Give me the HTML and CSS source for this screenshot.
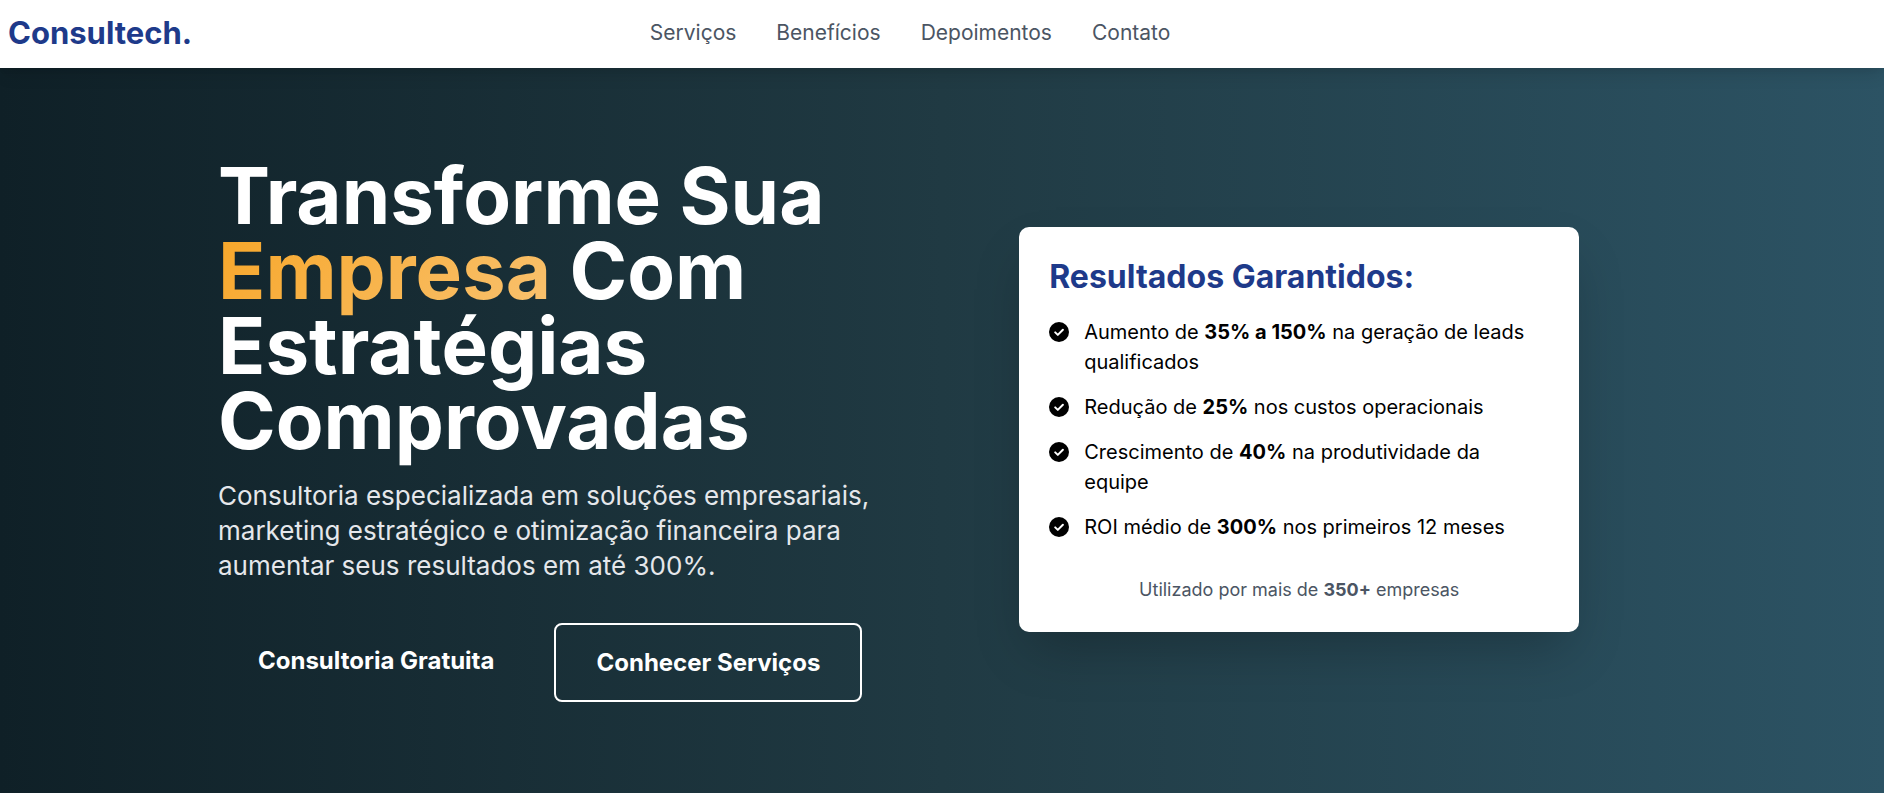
FILE: index.html
```html
<!DOCTYPE html>
<html lang="pt-BR">
<head>
    <meta charset="UTF-8">
    <meta name="viewport" content="width=device-width, initial-scale=1.0">
    <title>Consultech - Consultoria Empresarial</title>
    <link rel="stylesheet" href="styles.css">
</head>
<body>
    <!-- Icon used in the results list -->
    <svg class="sprite" aria-hidden="true">
        <symbol id="check" viewBox="0 0 20 20">
            <circle cx="10" cy="10" r="10" fill="currentColor"/>
            <path d="M6.2 10.4 8.8 12.9 13.9 7.7" fill="none" stroke="#fff" stroke-width="2" stroke-linecap="round" stroke-linejoin="round"/>
        </symbol>
    </svg>

    <!-- Header -->
    <header class="header">
        <a href="#" class="logo">Consultech.</a>
        <nav class="nav">
            <a href="#servicos">Serviços</a>
            <a href="#beneficios">Benefícios</a>
            <a href="#depoimentos">Depoimentos</a>
            <a href="#contato">Contato</a>
        </nav>
    </header>

    <!-- Hero -->
    <main class="hero">
        <div class="hero-container">
            <section class="hero-content">
                <h1>Transforme Sua <br><span class="highlight">Empresa</span> Com <br>Estratégias <br>Comprovadas</h1>
                <p class="hero-text">Consultoria especializada em soluções empresariais, <br>marketing estratégico e otimização financeira para <br>aumentar seus resultados em até 300%.</p>
                <div class="hero-buttons">
                    <a href="#contato" class="btn">Consultoria Gratuita</a>
                    <a href="#servicos" class="btn btn-outline">Conhecer Serviços</a>
                </div>
            </section>

            <aside class="card">
                <h2>Resultados Garantidos:</h2>
                <ul class="results">
                    <li>
                        <svg class="icon"><use href="#check"/></svg>
                        <span>Aumento de <strong>35% a 150%</strong> na geração de leads <br>qualificados</span>
                    </li>
                    <li>
                        <svg class="icon"><use href="#check"/></svg>
                        <span>Redução de <strong>25%</strong> nos custos operacionais</span>
                    </li>
                    <li>
                        <svg class="icon"><use href="#check"/></svg>
                        <span>Crescimento de <strong>40%</strong> na produtividade da <br>equipe</span>
                    </li>
                    <li>
                        <svg class="icon"><use href="#check"/></svg>
                        <span>ROI médio de <strong>300%</strong> nos primeiros 12 meses</span>
                    </li>
                </ul>
                <p class="card-note">Utilizado por mais de <strong>350+</strong> empresas</p>
            </aside>
        </div>
    </main>
</body>
</html>
```
FILE: styles.css
```css
* {
    box-sizing: border-box;
    margin: 0;
    padding: 0;
}

body {
    font-family: 'Inter', sans-serif;
    font-size: 20px;
    line-height: 30px;
    color: #000000;
    background: #ffffff;
    min-height: 100vh;
    display: flex;
    flex-direction: column;
}

a {
    color: inherit;
    text-decoration: none;
}

.sprite {
    display: none;
}

/* Header */
.header {
    position: relative;
    z-index: 1;
    display: flex;
    align-items: center;
    min-height: 68px;
    padding: 0 256px 2px 8px;
    background: #ffffff;
    box-shadow: 0 10px 15px -3px rgba(0, 0, 0, 0.1), 0 4px 6px -2px rgba(0, 0, 0, 0.05);
}

.logo {
    font-size: 31px;
    font-weight: 700;
    color: #1e3a8a;
}

.nav {
    display: flex;
    gap: 40px;
    margin: 0 auto;
    font-size: 21px;
    color: #4b5563;
}

.nav a:hover {
    color: #1e3a8a;
}

/* Hero */
.hero {
    flex: 1;
    display: flex;
    align-items: center;
    justify-content: center;
    padding: 40px 20px 42px;
    background: linear-gradient(to right, #0f2027, #203a43, #2c5364);
    color: #ffffff;
}

.hero-container {
    display: grid;
    grid-template-columns: 1fr 1fr;
    align-items: center;
    gap: 150px;
    width: 100%;
    max-width: 1448px;
}

h1 {
    font-size: 78px;
    line-height: 75px;
    font-weight: 700;
    margin-bottom: 20px;
    white-space: nowrap;
}

.highlight {
    background: linear-gradient(135deg, #f7a628, #f9c270);
    -webkit-background-clip: text;
    background-clip: text;
    color: transparent;
}

.hero-text {
    font-size: 26px;
    line-height: 35px;
    color: #e5e7eb;
    margin-bottom: 40px;
    white-space: nowrap;
}

.hero-buttons {
    display: flex;
    align-items: flex-start;
    gap: 20px;
}

.btn {
    padding: 20px 40px;
    font-size: 24px;
    line-height: 35px;
    font-weight: 700;
    border-radius: 8px;
    white-space: nowrap;
}

.btn-outline {
    border: 2px solid #ffffff;
}

.btn-outline:hover {
    background: #ffffff;
    color: #1e3a8a;
}

/* Results card */
.card {
    width: 100%;
    max-width: 560px;
    padding: 30px;
    background: #ffffff;
    color: #000000;
    border-radius: 10px;
    box-shadow: 0 25px 50px -12px rgba(0, 0, 0, 0.25);
}

.card h2 {
    font-size: 32px;
    line-height: 40px;
    font-weight: 700;
    color: #1e3a8a;
    margin-bottom: 20px;
}

.results {
    display: flex;
    flex-direction: column;
    gap: 15px;
    list-style: none;
}

.results li {
    display: flex;
    gap: 15px;
}

.icon {
    flex-shrink: 0;
    width: 20px;
    height: 20px;
    margin-top: 5px;
}

.card-note {
    margin-top: 35px;
    font-size: 18px;
    line-height: 25px;
    color: #4b5563;
    text-align: center;
}

@media (max-width: 1280px) {
    .header {
        padding-right: 8px;
    }

    .hero-container {
        grid-template-columns: 1fr;
        gap: 60px;
        max-width: 640px;
    }
}

@media (max-width: 700px) {
    .header,
    .nav,
    .hero-buttons {
        flex-wrap: wrap;
    }

    h1 {
        font-size: 40px;
        line-height: 44px;
    }

    h1,
    .hero-text {
        white-space: normal;
    }
}
```
